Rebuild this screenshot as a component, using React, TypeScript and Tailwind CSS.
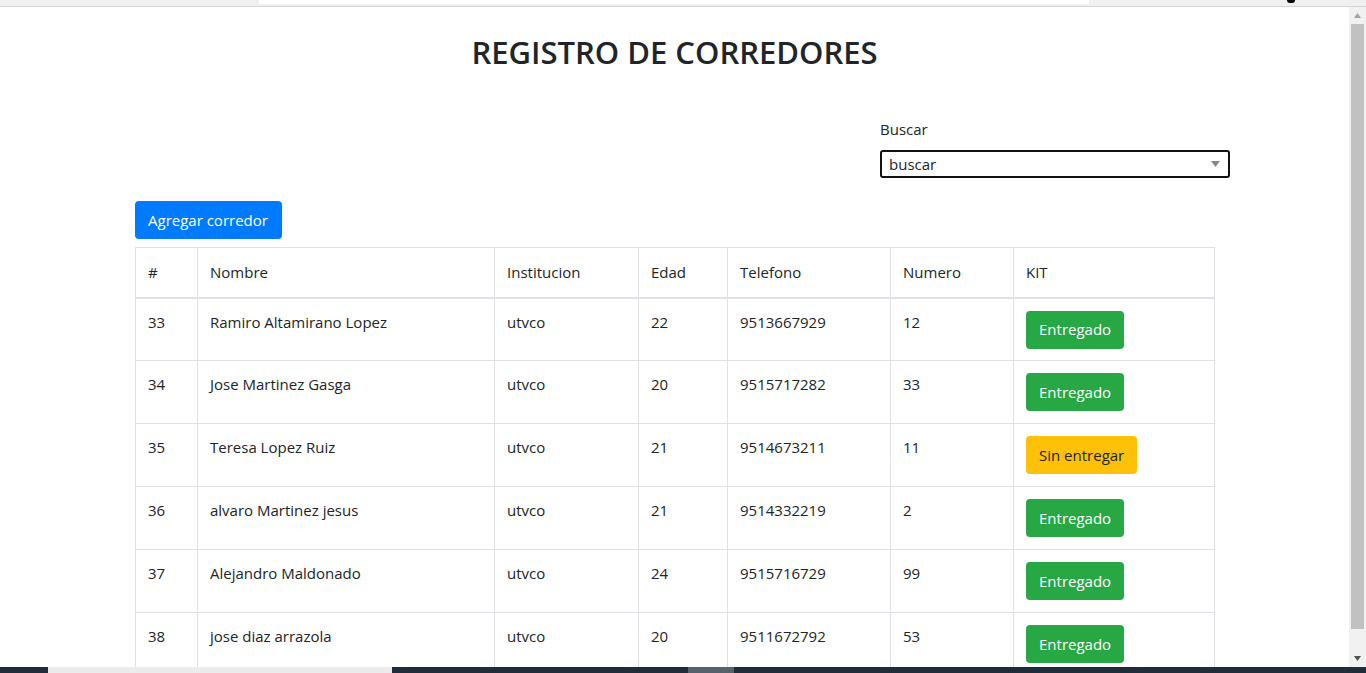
import React from "react";

const rows = [
  { id: 33, nombre: "Ramiro Altamirano Lopez", inst: "utvco", edad: 22, tel: "9513667929", num: 12, kit: true },
  { id: 34, nombre: "Jose Martinez Gasga", inst: "utvco", edad: 20, tel: "9515717282", num: 33, kit: true },
  { id: 35, nombre: "Teresa Lopez Ruiz", inst: "utvco", edad: 21, tel: "9514673211", num: 11, kit: false },
  { id: 36, nombre: "alvaro Martinez jesus", inst: "utvco", edad: 21, tel: "9514332219", num: 2, kit: true },
  { id: 37, nombre: "Alejandro Maldonado", inst: "utvco", edad: 24, tel: "9515716729", num: 99, kit: true },
  { id: 38, nombre: "jose diaz arrazola", inst: "utvco", edad: 20, tel: "9511672792", num: 53, kit: true },
];

const cols = ["#", "Nombre", "Institucion", "Edad", "Telefono", "Numero", "KIT"];
const widths = ["w-[62px]", "w-[297px]", "w-[144px]", "w-[89px]", "w-[163px]", "w-[123px]", "w-[201px]"];

export default function App() {
  return (
    <div
      className="h-[673px] w-[1366px] overflow-hidden flex flex-col bg-white text-[#212529]"
      style={{ fontFamily: '"Open Sans", "Noto Sans", sans-serif' }}
    >
      {/* top strip */}
      <div className="h-[7px] shrink-0 bg-[#f0f0f0] border-b border-[#d6d6d6] flex">
        <div className="ml-[259px] w-[830px] h-[4px] bg-white" />
        <div className="ml-[198px] w-[8px] h-[3px] bg-black rounded-b" />
      </div>

      {/* main area */}
      <div className="flex flex-1 min-h-0">
        <div className="flex-1 min-w-0 overflow-hidden">
          <h1 className="text-center text-[31px] font-semibold leading-[38px] mt-[26px] tracking-[0px]">
            REGISTRO DE CORREDORES
          </h1>

          <div className="ml-[880px] mt-[46px] w-[350px]">
            <div className="text-[15px] leading-6">Buscar</div>
            <div className="mt-[9px] h-[28px] border-2 border-[#111] rounded-[3px] flex items-center justify-between pl-[7px] pr-[8px]">
              <span className="text-[15px]">buscar</span>
              <svg width="9" height="6" viewBox="0 0 9 6"><path d="M0 0h9L4.5 6z" fill="#8a8a8a" /></svg>
            </div>
          </div>

          <div className="ml-[135px] w-[1079px] mt-[23px]">
            <button className="h-[38px] pl-[13px] pr-[14px] bg-[#007bff] text-white text-[15px] rounded-[4px]">
              Agregar corredor
            </button>

            <table className="mt-[8px] w-[1079px] border-collapse table-fixed text-[15px]">
              <thead>
                <tr>
                  {cols.map((c, i) => (
                    <th
                      key={c}
                      className={`${widths[i]} border border-[#dee2e6] border-b-2 text-left font-normal px-[12px] h-[50px] align-middle`}
                    >
                      {c}
                    </th>
                  ))}
                </tr>
              </thead>
              <tbody>
                {rows.map((r) => (
                  <tr key={r.id}>
                    <td className="border border-[#dee2e6] px-[12px] pt-[11px] h-[63px] align-top leading-6">{r.id}</td>
                    <td className="border border-[#dee2e6] px-[12px] pt-[11px] align-top leading-6">{r.nombre}</td>
                    <td className="border border-[#dee2e6] px-[12px] pt-[11px] align-top leading-6">{r.inst}</td>
                    <td className="border border-[#dee2e6] px-[12px] pt-[11px] align-top leading-6">{r.edad}</td>
                    <td className="border border-[#dee2e6] px-[12px] pt-[11px] align-top leading-6">{r.tel}</td>
                    <td className="border border-[#dee2e6] px-[12px] pt-[11px] align-top leading-6">{r.num}</td>
                    <td className="border border-[#dee2e6] px-[12px] pt-[12px] align-top">
                      {r.kit ? (
                        <button className="h-[38px] px-[13px] bg-[#28a745] text-white rounded-[4px] text-[15px]">
                          Entregado
                        </button>
                      ) : (
                        <button className="h-[38px] px-[13px] bg-[#ffc107] text-[#212529] rounded-[4px] text-[15px]">
                          Sin entregar
                        </button>
                      )}
                    </td>
                  </tr>
                ))}
              </tbody>
            </table>
          </div>
        </div>

        {/* scrollbar */}
        <div className="w-[17px] shrink-0 bg-[#f1f1f1] flex flex-col items-center">
          <div className="h-[17px] flex items-center justify-center">
            <svg width="7" height="5" viewBox="0 0 7 5"><path d="M0 5h7L3.5 0z" fill="#a3a3a3" /></svg>
          </div>
          <div className="w-[13px] h-[605px] bg-[#c1c1c1]" />
          <div className="flex-1" />
          <div className="h-[17px] flex items-center justify-center">
            <svg width="7" height="5" viewBox="0 0 7 5"><path d="M0 0h7L3.5 5z" fill="#505050" /></svg>
          </div>
        </div>
      </div>

      {/* bottom taskbar */}
      <div className="h-[6px] shrink-0 bg-[#1f2d3a] flex">
        <div className="ml-[48px] w-[344px] bg-[#ececec]" />
        <div className="ml-[296px] w-[46px] bg-[#55626d]" />
      </div>
    </div>
  );
}
